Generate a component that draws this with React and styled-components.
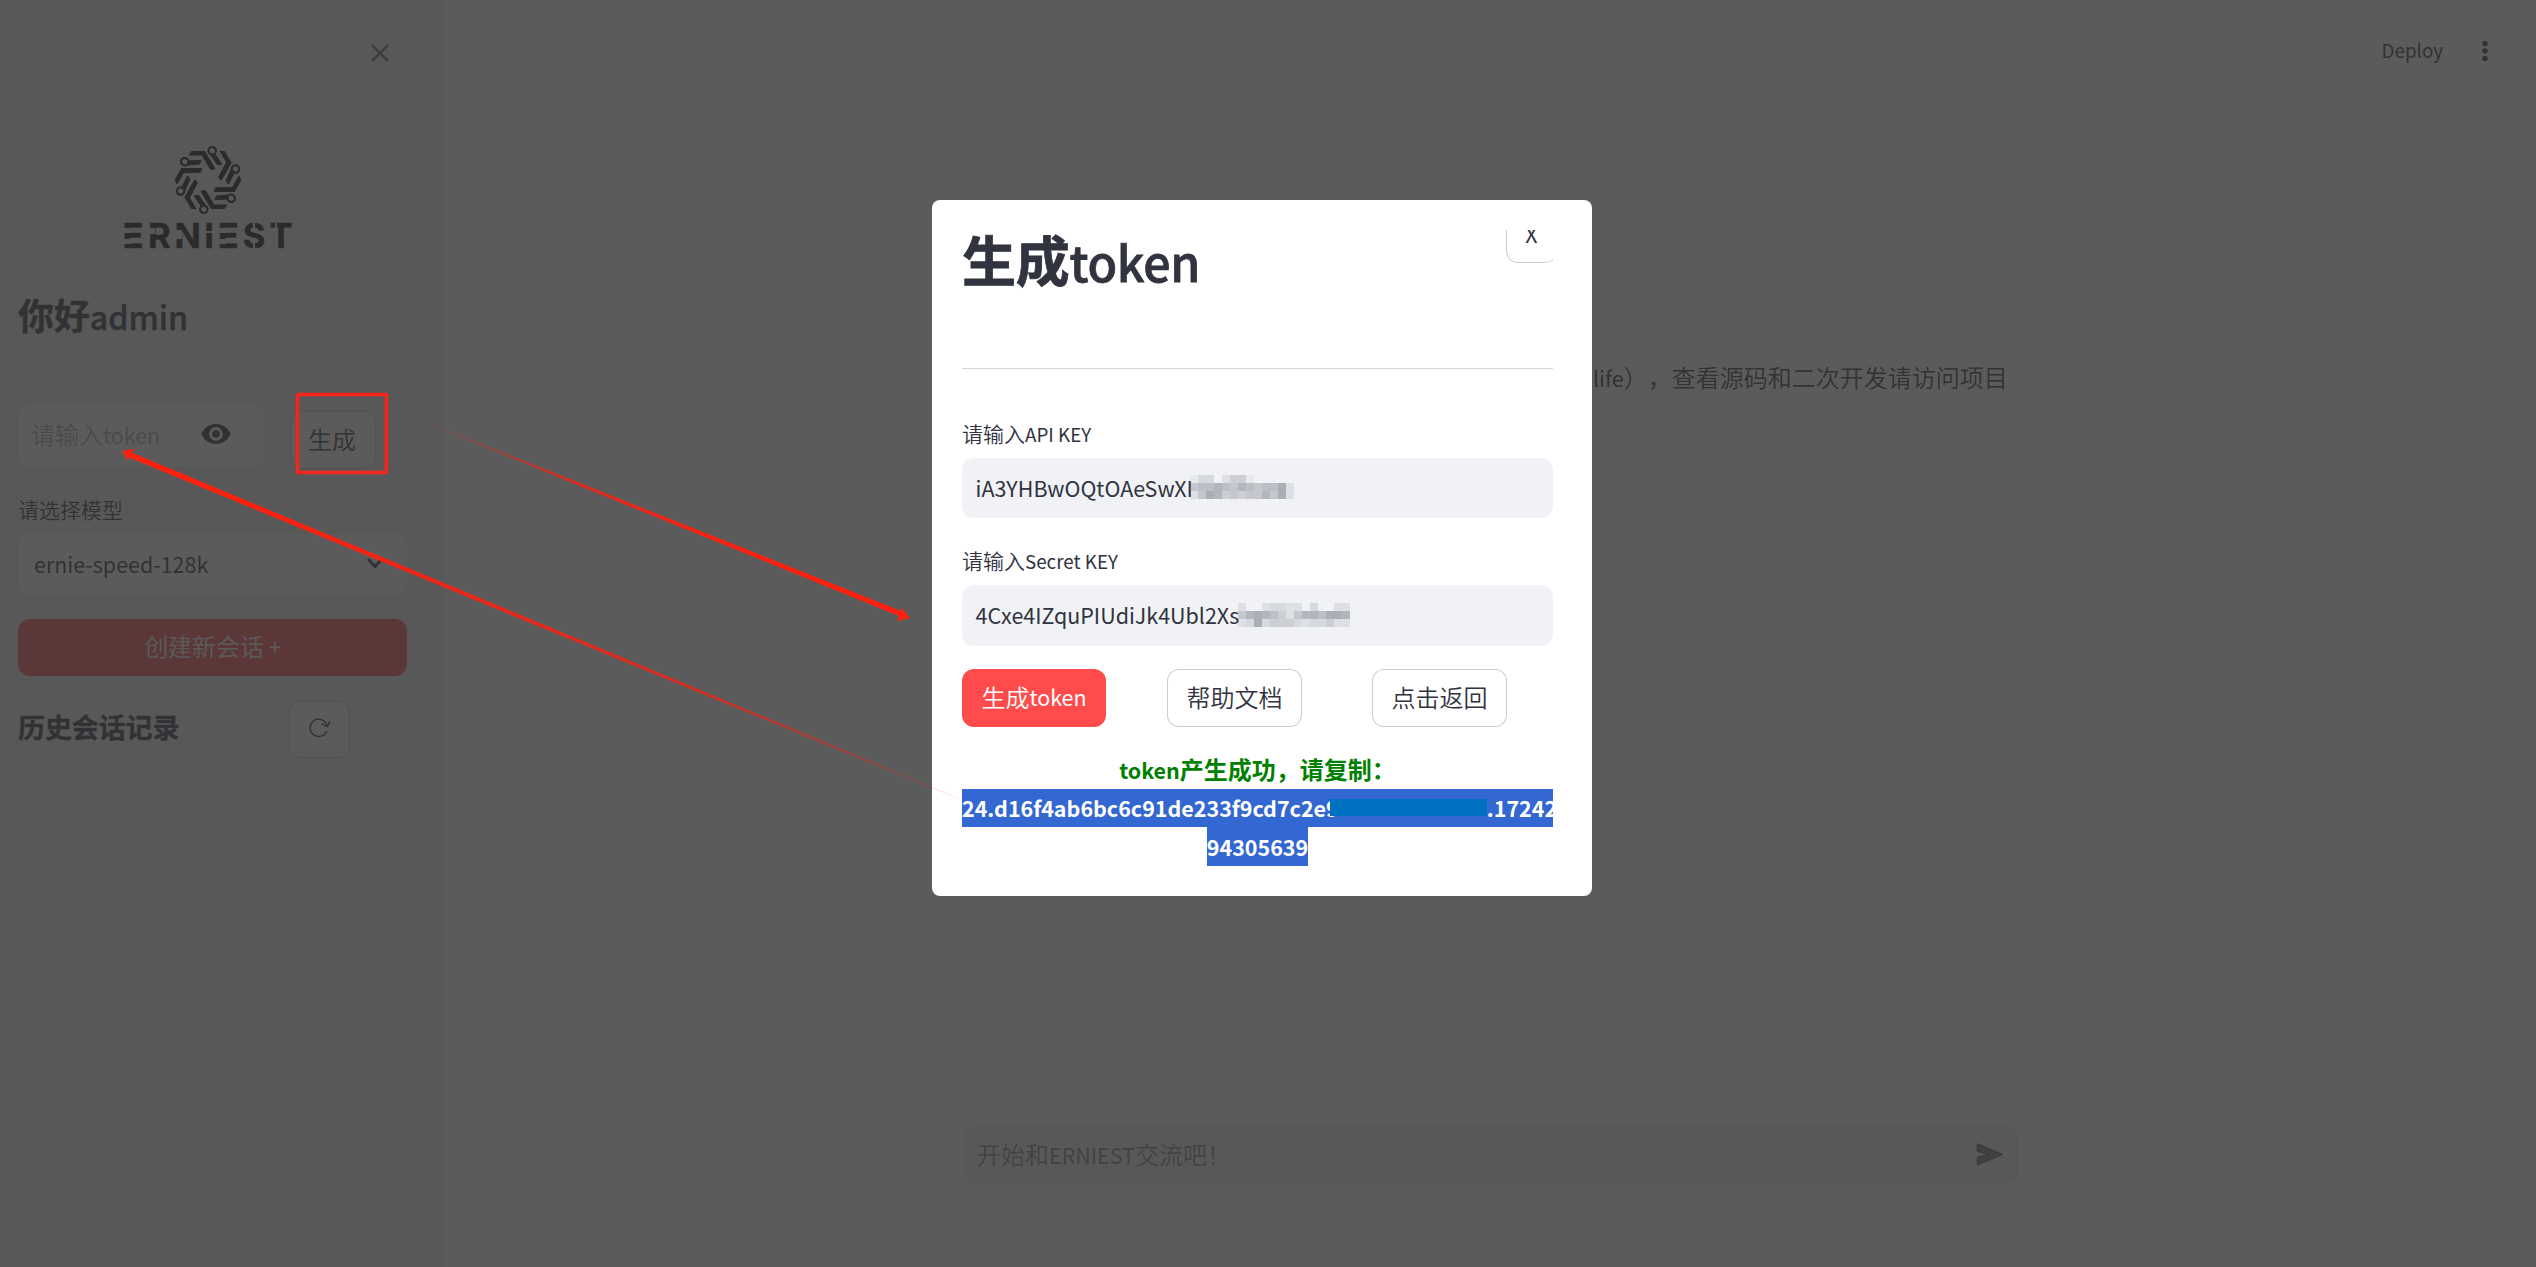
import React from "react";
import styled, { createGlobalStyle, css } from "styled-components";
import { MdVisibility } from "react-icons/md";

const ink = "#31333f";
const edge = "rgba(49, 51, 63, 0.24)";
const panel = "#f0f1f3";

const Global = createGlobalStyle`
  * { box-sizing: border-box; }
  body {
    margin: 0;
    overflow: hidden;
    background: #fff;
    color: ${ink};
    font-family: "Noto Sans CJK SC", "Noto Sans", sans-serif;
    font-size: 24px;
    font-weight: 350;
    line-height: 36px;
  }
`;

/* Latin runs are set smaller than the Han characters around them */
const Latin = styled.span`
  font-size: 0.895em;
  line-height: 1;
  font-weight: ${(p) => p.$weight};
`;

function Mixed({ children, weight = 400 }) {
  return children
    .split(/([\x20-\x7e]+)/)
    .filter(Boolean)
    .map((run, i) =>
      /^[\x20-\x7e]/.test(run) ? (
        <Latin key={i} $weight={weight}>{run}</Latin>
      ) : (
        <React.Fragment key={i}>{run}</React.Fragment>
      )
    );
}

const Page = styled.div`
  position: relative;
  display: grid;
  grid-template-columns: 443px 1fr;
  width: 2536px;
  height: 1267px;
  overflow: hidden;
`;

/* ---------- sidebar ---------- */

const Sidebar = styled.aside`
  display: flex;
  flex-direction: column;
  padding: 0 36px 0 18px;
  background: ${panel};
`;

const SidebarTop = styled.div`
  display: flex;
  justify-content: flex-end;
  padding: 44px 18px 0 0;
  height: 145px;
  color: rgba(49, 51, 63, 0.75);
`;

const Brand = styled.div`
  display: flex;
  flex-direction: column;
  align-items: center;
  padding-right: 10px;
  height: 121px;
  color: #101010;
`;

const Wordmark = styled.div`
  display: flex;
  justify-content: space-between;
  width: 168px;
  margin-top: 8px;
  font: 700 34.5px/26px Inter, "Noto Sans", sans-serif;
`;

const cut = (x, y, w, h) =>
  `linear-gradient(${panel}, ${panel}) ${x}px ${y}px / ${w}px ${h}px no-repeat`;

const cuts = {
  E: [cut(0, 5.3, 7, 5.2), cut(0, 15.8, 7, 5.2)],
  R: [cut(0, 5.3, 7.4, 6)],
  N: [cut(0, 7, 6.4, 9)],
  I: [cut(0, 8, 9, 2)],
  S: [cut(9.5, 0, 2, 8), cut(9.5, 18, 2, 8)],
  T: [cut(5, 0, 2, 6)],
};

const Letter = styled.span`
  position: relative;
  display: flex;
  justify-content: center;
  width: ${(p) => p.$w}px;
  -webkit-text-stroke: 0.5px currentColor;
  &::after {
    content: "";
    position: absolute;
    inset: 0;
    background: ${(p) => cuts[p.$cut].join(",")};
  }
`;

const Greeting = styled.h3`
  margin: 23px 0 0;
  font-size: 36px;
  line-height: 50px;
  font-weight: 700;
  letter-spacing: -0.1px;
  -webkit-text-stroke: 0.014em currentColor;
`;

const TokenRow = styled.div`
  display: flex;
  gap: 25px;
  margin-top: 66px;
`;

const Field = styled.div`
  display: flex;
  align-items: center;
  justify-content: space-between;
  height: 60.5px;
  border-radius: 12px;
  padding: 0 13.5px;
  background: ${(p) => (p.$tinted ? "#f0f2f6" : "#fff")};
  ${(p) => p.$width && css`width: ${p.$width}px;`}
`;

const TokenField = styled(Field)`
  padding: 0 13px 2px;
`;

const Placeholder = styled.span`
  color: rgba(49, 51, 63, 0.42);
`;

const EyeSlot = styled.span`
  display: flex;
  margin-right: 20px;
  font-size: 32px;
`;

const Button = styled.button`
  display: flex;
  align-items: center;
  justify-content: center;
  flex: none;
  width: ${(p) => p.$width}px;
  height: ${(p) => p.$height || 58}px;
  padding: 0 0 2px;
  border: ${(p) => (p.$primary ? "0" : `1.5px solid ${edge}`)};
  border-radius: 12px;
  background: ${(p) => (p.$primary ? "#ff4b4b" : "#fff")};
  color: ${(p) => (p.$primary ? "#fff" : ink)};
  font: inherit;
  white-space: pre;
`;

const GenerateSlot = styled.div`
  padding-top: 6px;
`;

const GenerateButton = styled(Button)`
  padding: 0 2px 2px 0;
`;

const Label = styled.div`
  font-size: 21px;
  line-height: 32px;
`;

const ModelBlock = styled.div`
  display: flex;
  flex-direction: column;
  gap: 9px;
  margin: 23.5px 0 24.5px;
`;

const SelectField = styled(Field)`
  padding: 0 24px 1px 16px;
`;

const HistoryRow = styled.div`
  display: flex;
  justify-content: space-between;
  align-items: center;
  margin-top: 25px;
  padding-right: 57px;
`;

const HistoryTitle = styled.h4`
  margin: 0 0 4px;
  font-size: 27px;
  font-weight: 700;
  letter-spacing: -0.1px;
  -webkit-text-stroke: 0.014em currentColor;
`;

/* ---------- main column ---------- */

const Main = styled.main`
  display: flex;
  flex-direction: column;
`;

const Toolbar = styled.header`
  display: flex;
  justify-content: flex-end;
  align-items: center;
  gap: 35px;
  height: 101px;
  padding-right: 44px;
  font-size: 21px;
`;

const DeployLink = styled.span`
  margin-bottom: 3px;
`;

const Intro = styled.p`
  margin: 258px 0 0;
  padding-left: 1150px;
  white-space: nowrap;
  text-spacing-trim: space-all;
`;

const ChatBar = styled.div`
  display: flex;
  align-items: center;
  justify-content: space-between;
  width: 1053px;
  height: 59px;
  margin: auto 0 83px 522px;
  padding: 0 14px 2px 12px;
  border-radius: 12px;
  background: ${panel};
  color: rgba(49, 51, 63, 0.6);
`;

/* ---------- dialog ---------- */

const Backdrop = styled.div`
  position: absolute;
  inset: 0;
  display: flex;
  justify-content: center;
  align-items: flex-start;
  padding: 200px 12px 0 0;
  background: rgba(50, 50, 50, 0.8);
`;

const Dialog = styled.section`
  display: flex;
  flex-direction: column;
  width: 660px;
  height: 695.5px;
  padding: 30px 39px 29px 30px;
  border-radius: 8px;
  background: #fff;
`;

const DialogHead = styled.div`
  display: flex;
  justify-content: space-between;
  align-items: flex-start;
  flex: none;
  height: 138.5px;
  border-bottom: 1.5px solid #d6d6d9;
`;

const DialogTitle = styled.h2`
  margin: 0;
  font-size: 54px;
  line-height: 58px;
  font-weight: 700;
  letter-spacing: -0.3px;
  -webkit-text-stroke: 0.014em currentColor;
`;

/* the close button sits in a slot smaller than itself */
const CloseSlot = styled.div`
  display: flex;
  align-items: flex-end;
  width: 47px;
  height: 33px;
  overflow: hidden;
`;

const KeyBlock = styled.div`
  display: flex;
  flex-direction: column;
  gap: 9px;
  margin-top: ${(p) => p.$top}px;
`;

const KeyValue = styled.span`
  display: flex;
  align-items: center;
  height: 56px;
  padding-bottom: 1px;
`;

const Mosaic = styled.span`
  display: grid;
  grid-template-columns: repeat(${(p) => p.$cols}, 8px);
  grid-auto-rows: 8px;
  margin: 0 0 0 ${(p) => p.$shift || 0}px;
`;

const Cell = styled.i`
  background: rgba(70, 72, 84, ${(p) => p.$level / 20});
`;

const Actions = styled.div`
  display: grid;
  grid-template-columns: 205px 205px auto;
  margin-top: 23.5px;
`;

const Result = styled.div`
  display: flex;
  flex-direction: column;
  align-items: center;
  margin-top: 23px;
  font-weight: 700;
  line-height: 38.5px;
  color: #008000;
`;

const Selected = styled.div`
  display: flex;
  align-items: center;
  height: 38.5px;
  overflow: hidden;
  background: #3367d1;
  color: #fff;
  white-space: nowrap;
  ${(p) => p.$full && css`align-self: stretch;`}
`;

const Redaction = styled.span`
  position: relative;
  flex: none;
  width: 157px;
  height: 17px;
  margin: 0 0 0 -9px;
  background: #0070c0;
`;

/* ---------- annotations ---------- */

const Markup = styled.svg`
  position: absolute;
  inset: 0;
  pointer-events: none;
`;

/* ---------- drawings ---------- */

const RingLogo = () => (
  <svg width="70" height="70" viewBox="-104 -104 208 208" fill="currentColor">
    {[0, 60, 120, 180, 240, 300].map((a) => (
      <g key={a} transform={`rotate(${a})`} stroke="currentColor" strokeWidth="3" strokeLinejoin="round">
        <path d="M-56-74-48-85H-10L20-34 18-32H8L-18-74Z" />
        <path d="M9-74 20-78 40-48 38-46H28Z" />
        <circle cx="12.5" cy="-87" r="11" fill={panel} strokeWidth="6.5" />
      </g>
    ))}
  </svg>
);

const CrossIcon = () => (
  <svg width="18" height="18" viewBox="0 0 18 18" fill="none" stroke="currentColor" strokeWidth="2.4" strokeLinecap="round">
    <path d="M1.5 1.5 16.5 16.5M16.5 1.5 1.5 16.5" />
  </svg>
);

const ChevronIcon = () => (
  <svg width="16" height="11" viewBox="0 0 16 11" fill="none" stroke="currentColor" strokeWidth="3.2" strokeLinecap="round" strokeLinejoin="round">
    <path d="M2 2 8 8.5 14 2" />
  </svg>
);

const RefreshIcon = () => (
  <svg width="24" height="24" viewBox="0 0 24 24" fill="none" stroke="currentColor" strokeWidth="1.4">
    <path d="M18.6 15.2A8.6 8.6 0 1 1 19 9.6M13.8 8.2 19.4 10.6 22 5.4" />
  </svg>
);

const DotsIcon = () => (
  <svg width="14" height="24" viewBox="0 0 14 24" fill="currentColor">
    <circle cx="7" cy="4.5" r="2.7" />
    <circle cx="7" cy="12" r="2.7" />
    <circle cx="7" cy="19.5" r="2.7" />
  </svg>
);

const SendIcon = () => (
  <svg width="28" height="28" viewBox="0 0 24 24" fill="currentColor" stroke="currentColor" strokeWidth="1.4" strokeLinejoin="round">
    <path d="M1.2 21.2 22.6 12.4 1.2 3.4V9.6L10.6 12.4 1.2 15Z" />
  </svg>
);

const apiMosaic = [
  [1, 3, 3, 0, 2, 4, 4, 1, 0, 0, 0, 0, 0],
  [5, 6, 6, 7, 6, 5, 7, 6, 5, 6, 6, 8, 2],
  [2, 5, 8, 7, 4, 5, 4, 5, 5, 7, 5, 8, 2],
];
const secretMosaic = [
  [2, 0, 0, 2, 3, 3, 2, 2, 0, 3, 0, 0, 2, 2],
  [5, 7, 8, 7, 6, 4, 2, 5, 7, 7, 6, 8, 8, 7],
  [2, 3, 8, 3, 4, 4, 4, 3, 2, 3, 3, 4, 2, 2],
];

const PixelPatch = ({ rows, shift }) => (
  <Mosaic $cols={rows[0].length} $shift={shift}>
    {rows.flat().map((level, i) => <Cell key={i} $level={level} />)}
  </Mosaic>
);

const letters = [["E", 19], ["R", 22], ["N", 23], ["I", 8], ["E", 19], ["S", 21], ["T", 21]];

export default function App() {
  return (
    <Page>
      <Global />
      <Sidebar>
        <SidebarTop><CrossIcon /></SidebarTop>
        <Brand>
          <RingLogo />
          <Wordmark>
            {letters.map(([ch, w], i) => <Letter key={i} $w={w} $cut={ch}>{ch}</Letter>)}
          </Wordmark>
        </Brand>
        <Greeting><Mixed weight={500}>你好admin</Mixed></Greeting>
        <TokenRow>
          <TokenField $width={247}>
            <Placeholder><Mixed>请输入token</Mixed></Placeholder>
            <EyeSlot><MdVisibility /></EyeSlot>
          </TokenField>
          <GenerateSlot><GenerateButton $width={86}>生成</GenerateButton></GenerateSlot>
        </TokenRow>
        <ModelBlock>
          <Label>请选择模型</Label>
          <SelectField><span><Mixed>ernie-speed-128k</Mixed></span><ChevronIcon /></SelectField>
        </ModelBlock>
        <Button $primary $width={389} $height={57}><Mixed>创建新会话 +</Mixed></Button>
        <HistoryRow>
          <HistoryTitle>历史会话记录</HistoryTitle>
          <Button $width={61} $height={57}><RefreshIcon /></Button>
        </HistoryRow>
      </Sidebar>

      <Main>
        <Toolbar><DeployLink><Mixed>Deploy</Mixed></DeployLink><DotsIcon /></Toolbar>
        <Intro><Mixed>life</Mixed>），查看源码和二次开发请访问项目</Intro>
        <ChatBar><span><Mixed>开始和ERNIEST交流吧！</Mixed></span><SendIcon /></ChatBar>
      </Main>

      <Backdrop>
        <Dialog>
          <DialogHead>
            <DialogTitle><Mixed weight={500}>生成token</Mixed></DialogTitle>
            <CloseSlot><Button $width={51} $height={57}><Mixed>X</Mixed></Button></CloseSlot>
          </DialogHead>
          <KeyBlock $top={48}>
            <Label><Mixed>请输入API KEY</Mixed></Label>
            <Field $tinted>
              <KeyValue><Mixed>iA3YHBwOQtOAeSwXI</Mixed><PixelPatch rows={apiMosaic} shift={-3} /></KeyValue>
            </Field>
          </KeyBlock>
          <KeyBlock $top={26}>
            <Label><Mixed>请输入Secret KEY</Mixed></Label>
            <Field $tinted>
              <KeyValue><Mixed>4Cxe4IZquPIUdiJk4Ubl2Xs</Mixed><PixelPatch rows={secretMosaic} shift={-1} /></KeyValue>
            </Field>
          </KeyBlock>
          <Actions>
            <Button $primary $width={144}><Mixed>生成token</Mixed></Button>
            <Button $width={135}>帮助文档</Button>
            <Button $width={135}>点击返回</Button>
          </Actions>
          <Result>
            <div><Mixed weight={700}>token产生成功，请复制：</Mixed></div>
            <Selected $full>
              <Mixed weight={700}>24.d16f4ab6bc6c91de233f9cd7c2e9</Mixed>
              <Redaction />
              <Mixed weight={700}>.17242</Mixed>
            </Selected>
            <Selected><Mixed weight={700}>94305639</Mixed></Selected>
          </Result>
        </Dialog>
      </Backdrop>

      <Markup width="2536" height="1267">
        <defs>
          <linearGradient id="toDialog" gradientUnits="userSpaceOnUse" x1="430" y1="424" x2="910" y2="618">
            <stop offset="0" stopColor="#ff2010" stopOpacity="0.1" />
            <stop offset="0.3" stopColor="#ff2010" stopOpacity="0.8" />
            <stop offset="0.6" stopColor="#ff2010" />
          </linearGradient>
          <linearGradient id="toField" gradientUnits="userSpaceOnUse" x1="960" y1="799" x2="122" y2="451">
            <stop offset="0" stopColor="#ff2010" stopOpacity="0.05" />
            <stop offset="0.15" stopColor="#ff2010" stopOpacity="0.5" />
            <stop offset="0.3" stopColor="#ff2010" stopOpacity="0.75" />
            <stop offset="0.6" stopColor="#ff2010" stopOpacity="0.9" />
            <stop offset="0.85" stopColor="#ff2010" />
          </linearGradient>
        </defs>
        <rect x="297.5" y="394.5" width="89" height="78" rx="1" fill="none" stroke="#f5261a" strokeWidth="3.6" />
        <path fill="url(#toDialog)" d="M430 423.6 570 479 901 611 902 608 910 618 897 621 899 616 570 482 430 424.4Z" />
        <path fill="url(#toField)" d="M960 798.6V799.8L570 639.3 129 457.5 128 461 122 451 135 448.5 131.5 452.5 570 635.5Z" />
      </Markup>
    </Page>
  );
}
